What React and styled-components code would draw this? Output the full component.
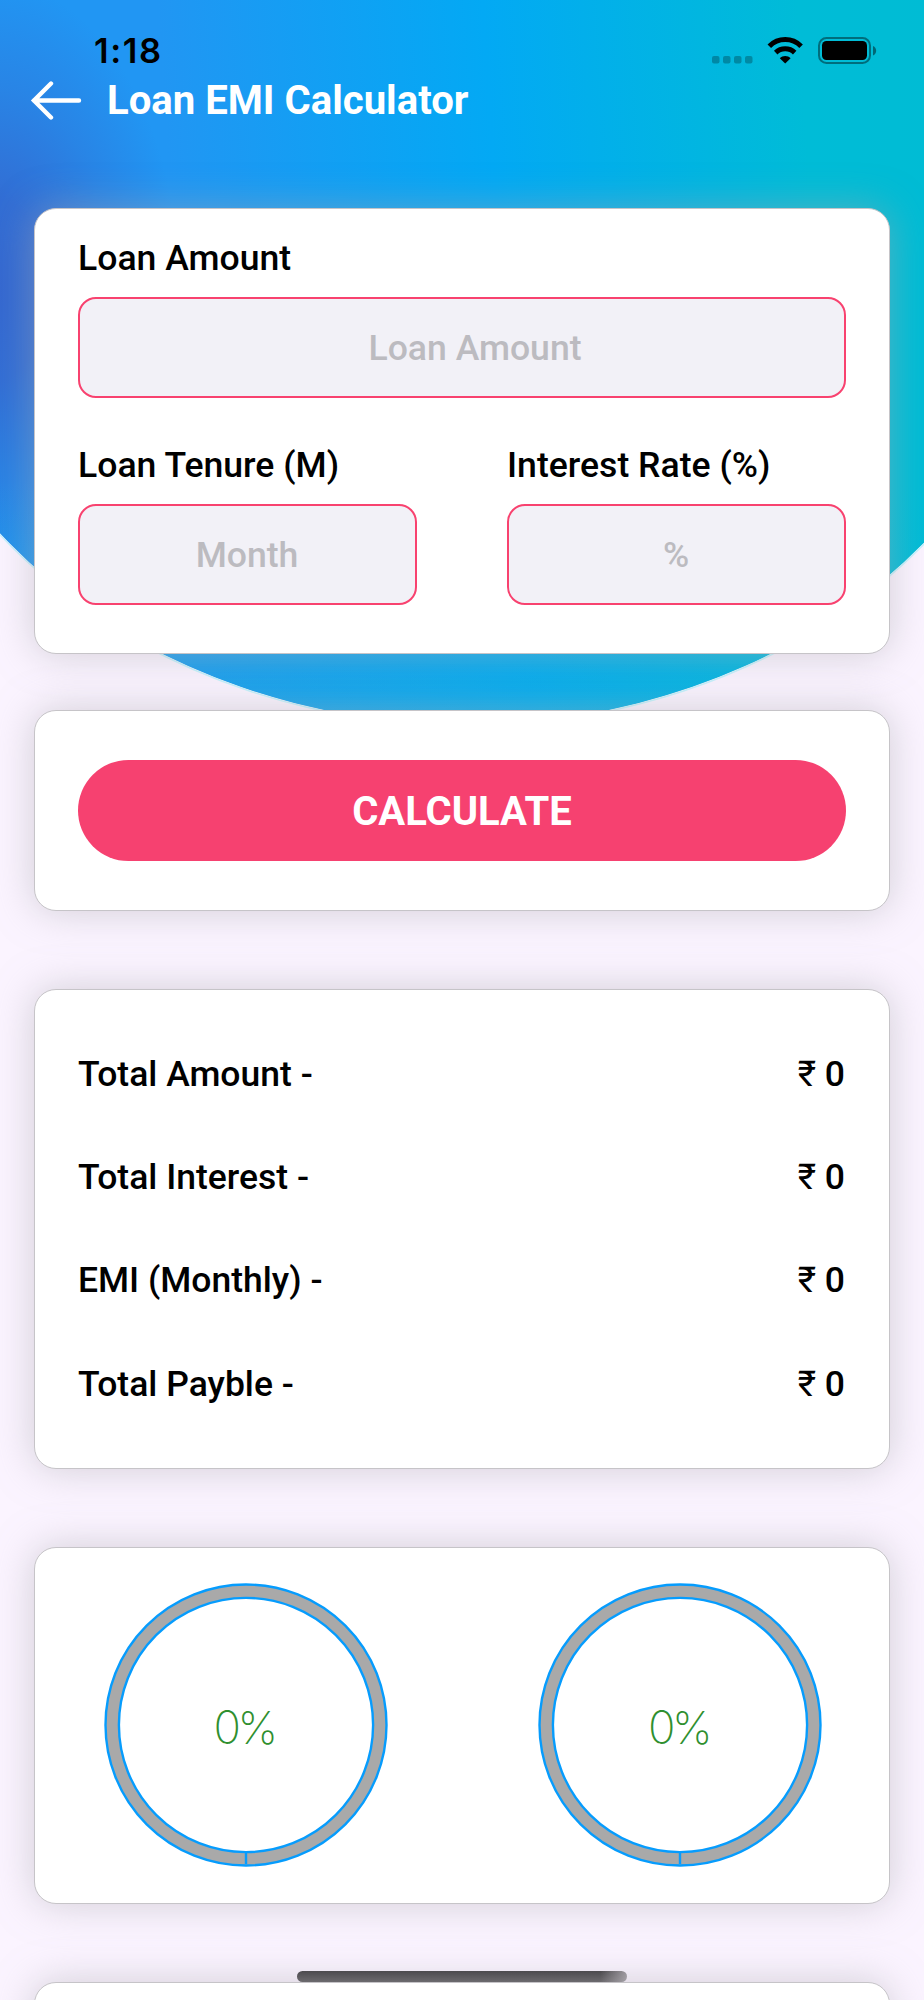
import { useState } from "react";
import styled, { createGlobalStyle } from "styled-components";

const GlobalStyle = createGlobalStyle`
  * {
    box-sizing: border-box;
  }

  body {
    margin: 0;
    background: #faf3fe;
    font-family: Roboto, "Liberation Sans", sans-serif;
  }
`;

const Screen = styled.div`
  position: relative;
  width: 924px;
  height: 2000px;
  overflow: hidden;
  background: #fbf4ff;
`;

const Backdrop = styled.svg`
  position: absolute;
  top: 0;
  left: 0;
`;

const Content = styled.div`
  position: relative;
`;

const StatusBar = styled.div`
  display: flex;
  justify-content: space-between;
  align-items: flex-start;
  height: 76px;
  padding: 31px 47px 0 94px;
`;

const Clock = styled.div`
  font-family: Inter, sans-serif;
  font-size: 34.5px;
  font-weight: 600;
  line-height: 40px;
  letter-spacing: 1.6px;
`;

const StatusIcons = styled.svg`
  margin-top: 3px;
`;

const Header = styled.header`
  display: flex;
  align-items: center;
  height: 48px;
  padding-left: 30px;
`;

const BackButton = styled.button`
  display: flex;
  padding: 0;
  border: none;
  background: none;
`;

const Title = styled.h1`
  margin: 2px 0 0 25px;
  color: #fff;
  font-size: 40.1px;
  font-weight: 700;
  line-height: 48px;
`;

const Card = styled.section`
  width: 856px;
  height: ${(props) => props.$height}px;
  margin: ${(props) => props.$gap}px 0 0 34px;
  padding: ${(props) => props.$top}px 43px 0;
  border: 1px solid #c6c4c8;
  border-radius: 22px;
  background: #fff;
  box-shadow: 0 0 38px rgba(170, 168, 174, 0.5);
`;

const FieldRow = styled.div`
  display: flex;
  gap: 90px;
  margin-top: ${(props) => props.$top || 0}px;
`;

const Field = styled.label`
  flex: 1;
  min-width: 0;
`;

const Label = styled.div`
  height: 60px;
  font-size: 35.6px;
  font-weight: 500;
  line-height: 42px;
`;

const Input = styled.input`
  display: block;
  width: 100%;
  height: 101px;
  padding: 0 ${(props) => (props.$indent ? 0 : 1)}px 0 ${(props) => props.$indent || 0}px;
  border: 2px solid #f8426f;
  border-radius: 18px;
  outline: none;
  background: #f2f1f7;
  font: 500 35.6px Roboto, sans-serif;
  text-align: center;

  &::placeholder {
    color: #bcbbc0;
  }
`;

const CalculateButton = styled.button`
  display: block;
  width: 100%;
  height: 101px;
  padding: 1px 0 0;
  border: none;
  border-radius: 51px;
  background: #f64170;
  color: #fff;
  font: 700 40px Roboto, sans-serif;
`;

const ResultRow = styled.div`
  display: flex;
  justify-content: space-between;
  align-items: center;
  height: 103.4px;
  padding-right: 1px;
  font-size: 35.5px;
  font-weight: 500;
`;

const Rupee = styled.span`
  font-weight: 400;
`;

const Charts = styled.div`
  display: flex;
  justify-content: space-between;
  padding: 0 24px 0 25.5px;
`;

const Chart = styled.div`
  display: grid;
  width: 284px;
  height: 284px;
  place-items: center;

  & > * {
    grid-area: 1 / 1;
  }
`;

const Percent = styled.div`
  padding: 5px 3px 0 0;
  color: #2f8f2f;
  font-family: Inter, sans-serif;
  font-size: 45.5px;
  font-weight: 200;
  letter-spacing: -3.5px;
`;

const HomeIndicator = styled.div`
  position: absolute;
  top: 1971px;
  left: 297px;
  width: 330px;
  height: 11px;
  border-radius: 6px;
  background: linear-gradient(90deg, transparent 92%, rgba(190, 185, 192, 0.7)),
    linear-gradient(#4c4a4e, #6c6a6e);
`;

const results = ["Total Amount -", "Total Interest -", "EMI (Monthly) -", "Total Payble -"];

function HeaderBackdrop() {
  return (
    <Backdrop width="924" height="740" viewBox="0 0 924 740">
      <defs>
        <linearGradient id="sky" gradientUnits="userSpaceOnUse" x1="0" y1="0" x2="924" y2="-60">
          <stop offset="0" stopColor="#2196f3" />
          <stop offset="0.17" stopColor="#2196f3" />
          <stop offset="0.52" stopColor="#03a9f4" />
          <stop offset="0.86" stopColor="#00bcd7" />
          <stop offset="1" stopColor="#00bcd4" />
        </linearGradient>
        <radialGradient
          id="shade"
          gradientUnits="userSpaceOnUse"
          cx="0"
          cy="0"
          r="1"
          gradientTransform="translate(-10 290) scale(190 310)"
        >
          <stop offset="0" stopColor="#3567cf" />
          <stop offset="0.3" stopColor="#3567cf" stopOpacity="0.85" />
          <stop offset="0.65" stopColor="#3567cf" stopOpacity="0.38" />
          <stop offset="1" stopColor="#3567cf" stopOpacity="0" />
        </radialGradient>
        <linearGradient id="glow" x1="0" y1="0" x2="0" y2="1">
          <stop offset="0.65" stopColor="#0fb5de" stopOpacity="0" />
          <stop offset="0.95" stopColor="#0fb5de" stopOpacity="0.34" />
        </linearGradient>
        <clipPath id="bowl">
          <path d="M-124 230V0H1057V230A590.5 494.5 0 0 1 -124 230Z" />
        </clipPath>
      </defs>
      <g clipPath="url(#bowl)">
        <rect width="924" height="740" fill="url(#sky)" />
        <rect width="924" height="740" fill="url(#shade)" />
        <rect width="924" height="740" fill="url(#glow)" />
      </g>
      <path d="M-125 230A591.5 495.5 0 0 0 1058 230" fill="none" stroke="#c5f2fc" strokeWidth="1.5" />
    </Backdrop>
  );
}

function Status() {
  return (
    <StatusIcons width="167" height="32" viewBox="0 0 167 32">
      <g opacity="0.25">
        <rect x="2" y="22" width="7.5" height="7.5" rx="2" />
        <rect x="13" y="22" width="7.5" height="7.5" rx="2" />
        <rect x="24" y="22" width="7.5" height="7.5" rx="2" />
        <rect x="35" y="22" width="7.5" height="7.5" rx="2" />
      </g>
      <g fill="none" stroke="#000" strokeWidth="5">
        <path d="M59.3 12.2C68.2 3.3 82.2 3.3 91.1 12.2" />
        <path d="M65.7 18.6C70.9 13.6 79.5 13.6 84.7 18.6" />
      </g>
      <path d="M75.2 29.6L69.8 24.2C72.7 21.3 77.7 21.3 80.6 24.2Z" />
      <rect x="109" y="4" width="51" height="25" rx="7.5" fill="none" stroke="#000" strokeOpacity="0.42" strokeWidth="2" />
      <rect x="112" y="7" width="45" height="19" rx="4.5" />
      <path d="M163 12C167.2 13.6 167.2 19.8 163 21.4Z" opacity="0.45" />
    </StatusIcons>
  );
}

function PercentChart({ value }) {
  return (
    <Chart>
      <svg width="284" height="284" viewBox="0 0 284 284" fill="none">
        <circle cx="142" cy="142" r="134" stroke="#a9a9a9" strokeWidth="13" />
        <g stroke="#069cfd" strokeWidth="2.4">
          <circle cx="142" cy="142" r="140.5" />
          <circle cx="142" cy="142" r="127.1" />
          <path d="M142 269V281" />
        </g>
      </svg>
      <Percent>{value}%</Percent>
    </Chart>
  );
}

export default function App() {
  const [amount, setAmount] = useState("");
  const [tenure, setTenure] = useState("");
  const [rate, setRate] = useState("");

  return (
    <Screen>
      <GlobalStyle />
      <HeaderBackdrop />
      <Content>
        <StatusBar>
          <Clock>1:18</Clock>
          <Status />
        </StatusBar>
        <Header>
          <BackButton aria-label="Back">
            <svg width="52" height="40" viewBox="0 0 52 40" fill="none" stroke="#fff" strokeWidth="4.4" strokeLinecap="round">
              <path d="M49 20.5H4M21 3.5L4 20.5L21 37.5" />
            </svg>
          </BackButton>
          <Title>Loan EMI Calculator</Title>
        </Header>

        <Card $height={446} $gap={84} $top={28}>
          <FieldRow>
            <Field>
              <Label>Loan Amount</Label>
              <Input
                $indent={26}
                value={amount}
                onChange={(e) => setAmount(e.target.value)}
                placeholder="Loan Amount"
              />
            </Field>
          </FieldRow>
          <FieldRow $top={46}>
            <Field>
              <Label>Loan Tenure (M)</Label>
              <Input value={tenure} onChange={(e) => setTenure(e.target.value)} placeholder="Month" />
            </Field>
            <Field>
              <Label>Interest Rate (%)</Label>
              <Input value={rate} onChange={(e) => setRate(e.target.value)} placeholder="%" />
            </Field>
          </FieldRow>
        </Card>

        <Card $height={201} $gap={56} $top={49}>
          <CalculateButton>CALCULATE</CalculateButton>
        </Card>

        <Card $height={480} $gap={78} $top={32}>
          {results.map((name) => (
            <ResultRow key={name}>
              <span>{name}</span>
              <span>
                <Rupee>₹</Rupee> 0
              </span>
            </ResultRow>
          ))}
        </Card>

        <Card $height={357} $gap={78} $top={35}>
          <Charts>
            <PercentChart value={0} />
            <PercentChart value={0} />
          </Charts>
        </Card>

        <Card $height={357} $gap={78} $top={35} />
      </Content>
      <HomeIndicator />
    </Screen>
  );
}
